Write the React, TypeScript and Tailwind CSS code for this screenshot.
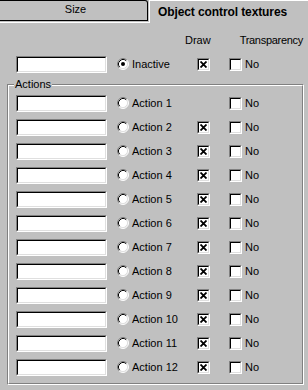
const rows = Array.from({ length: 12 }, (_, i) => ({ label: `Action ${i + 1}`, draw: i !== 0 }));

function TextBox() {
  return (
    <div className="w-[91px] h-[17px] border border-t-[#808080] border-l-[#808080] border-b-white border-r-white">
      <div className="w-full h-full bg-white border border-t-black border-l-black border-b-[#dfdfdf] border-r-[#dfdfdf]" />
    </div>
  );
}

function Radio({ checked }: { checked?: boolean }) {
  return (
    <svg width="12" height="12" viewBox="0 0 12 12" className="shrink-0">
      <circle cx="6" cy="6" r="5" fill="white" />
      <path d="M2.11 9.89 A5.5 5.5 0 0 1 9.89 2.11" fill="none" stroke="#808080" />
      <path d="M2.82 9.18 A4.5 4.5 0 0 1 9.18 2.82" fill="none" stroke="#000" />
      <path d="M9.89 2.11 A5.5 5.5 0 0 1 2.11 9.89" fill="none" stroke="#fff" />
      <path d="M9.18 2.82 A4.5 4.5 0 0 1 2.82 9.18" fill="none" stroke="#dfdfdf" />
      {checked && <circle cx="6" cy="6" r="2" fill="#000" />}
    </svg>
  );
}

function Check({ checked }: { checked?: boolean }) {
  return (
    <div className="w-[13px] h-[13px] shrink-0 border border-t-[#808080] border-l-[#808080] border-b-white border-r-white">
      <div className="w-full h-full bg-white border border-t-black border-l-black border-b-[#dfdfdf] border-r-[#dfdfdf] flex items-center justify-center">
        {checked && (
          <svg width="7" height="7" viewBox="0 0 7 7">
            <path d="M0.5 0.5 L6.5 6.5 M6.5 0.5 L0.5 6.5" stroke="#000" strokeWidth="1.8" />
          </svg>
        )}
      </div>
    </div>
  );
}

function Row({ label, draw, checked }: { label: string; draw: boolean; checked?: boolean }) {
  return (
    <div className="flex items-center h-[24px]">
      <TextBox />
      <div className="ml-[10px]">
        <Radio checked={checked} />
      </div>
      <span className="ml-[3px] w-[65px] leading-[14px]">{label}</span>
      <div className="w-[13px]">{draw && <Check checked />}</div>
      <div className="ml-[19px]">
        <Check />
      </div>
      <span className="ml-[3px] leading-[14px]">No</span>
    </div>
  );
}

export default function App() {
  return (
    <div className="w-[308px] h-[390px] overflow-hidden bg-[#c0c0c0] text-black text-[11px] font-[Liberation_Sans,Arial,sans-serif] flex flex-col">
      {/* tabs */}
      <div className="flex h-[22px] shrink-0">
        <div className="w-[148px] h-[21px] border-t border-b border-r border-black rounded-tr-[3px] flex items-center justify-center pb-[2px] pl-[4px]">
          Size
        </div>
        <div className="flex-1 h-[23px] border-l border-t border-white ml-[1px] relative z-10 bg-[#c0c0c0] pl-[8px] pt-[4px] text-[12px] font-bold tracking-[-0.1px] leading-[14px]">
          Object control textures
        </div>
      </div>

      {/* panel */}
      <div className="flex-1 border-t border-white pl-[16px]">
        <div className="flex h-[14px] mt-[10px] leading-[14px]">
          <span className="ml-[169px]">Draw</span>
          <span className="ml-[29px] tracking-[-0.3px]">Transparency</span>
        </div>
        <div className="mt-[5px]">
          <Row label="Inactive" draw checked />
        </div>

        {/* Actions group */}
        <div className="relative mt-[8px] -ml-[9px] w-[297px] h-[301px] border border-t-[#808080] border-l-[#808080] border-b-white border-r-white">
          <div className="w-full h-full border border-t-white border-l-white border-b-[#808080] border-r-[#808080] pl-[7px] pt-[5px]">
            {rows.map((r) => (
              <Row key={r.label} label={r.label} draw={r.draw} />
            ))}
          </div>
          <span className="absolute -top-[7px] left-[6px] px-[1px] bg-[#c0c0c0] leading-[13px]">Actions</span>
        </div>
      </div>
    </div>
  );
}
